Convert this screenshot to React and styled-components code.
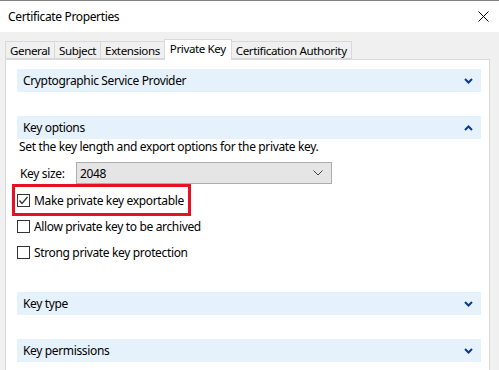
import styled, { createGlobalStyle } from 'styled-components';

const Global = createGlobalStyle`
  html, body {
    margin: 0;
    padding: 0;
    background: #f0f0f0;
    overflow: hidden;
  }
  body {
    font-family: "Noto Sans", "Segoe UI", sans-serif;
    font-size: 12px;
    letter-spacing: -0.35px;
    color: #000;
  }
`;

const Window = styled.div`
  width: 499px;
  height: 370px;
  border-top: 1px solid #808080;
  box-sizing: border-box;
  display: flex;
  flex-direction: column;
  overflow: hidden;
`;

const TitleBar = styled.div`
  height: 31px;
  background: #fff;
  display: flex;
  align-items: center;
  justify-content: space-between;
  padding: 0 10px 0 8px;
  flex-shrink: 0;
`;

const Title = styled.span`
  font-size: 12px;
`;

const Body = styled.div`
  flex: 1;
  padding: 7px 9px 0 5px;
  display: flex;
  flex-direction: column;
`;

const Tabs = styled.div`
  display: flex;
  align-items: flex-end;
  height: 20px;
  padding-left: 1px;
  position: relative;
  z-index: 1;
`;

const Tab = styled.div`
  height: ${p => (p.$active ? '21px' : '18px')};
  margin-bottom: ${p => (p.$active ? '-1px' : '0')};
  padding: 0 ${p => (p.$active ? '5px' : '4px')};
  font-size: 11.6px;
  letter-spacing: -0.4px;
  background: ${p => (p.$active ? '#fff' : '#f0f0f0')};
  border: 1px solid #d9d9d9;
  border-bottom: ${p => (p.$active ? 'none' : '1px solid #d9d9d9')};
  margin-left: -1px;
  box-sizing: border-box;
  display: flex;
  align-items: ${p => (p.$active ? 'flex-start' : 'center')};
  padding-top: ${p => (p.$active ? '1px' : '0')};
  white-space: nowrap;
`;

const Panel = styled.div`
  flex: 1;
  background: #fff;
  border: 1px solid #d9d9d9;
  border-bottom: none;
  padding: 9px 8px 0 11px;
  display: flex;
  flex-direction: column;
`;

const SectionHeader = styled.div`
  height: 23px;
  background: #e5f1fb;
  display: flex;
  align-items: center;
  justify-content: space-between;
  padding: 0 8px 0 6px;
  margin-top: ${p => p.$gap || 0}px;
  flex-shrink: 0;
`;

const Description = styled.div`
  margin: 0 0 0 2px;
  line-height: 16px;
`;

const SizeRow = styled.div`
  display: flex;
  align-items: center;
  margin-top: 7px;
  height: 22px;
`;

const SizeLabel = styled.span`
  width: 56px;
  padding-left: 3px;
`;

const Select = styled.div`
  width: 256px;
  height: 22px;
  box-sizing: border-box;
  background: #e5e5e5;
  border: 1px solid #adadad;
  display: flex;
  align-items: center;
  justify-content: space-between;
  padding: 0 8px 0 3px;
`;

const Options = styled.div`
  display: flex;
  flex-direction: column;
  align-items: flex-start;
  position: relative;
  left: -5px;
`;

const Highlight = styled.div`
  border: 3px solid #e81123;
  padding: 0 4px 0 2px;
  display: flex;
  margin-bottom: -3px;
`;

const OptionRow = styled.label`
  display: flex;
  align-items: center;
  gap: 4px;
  height: 26px;
  padding-left: ${p => (p.$plain ? '5px' : '0')};
`;

const Box = styled.span`
  width: 13px;
  height: 13px;
  box-sizing: border-box;
  border: 1px solid #333;
  background: #fff;
  display: flex;
  align-items: center;
  justify-content: center;
`;

const Chevron = ({ up }) => (
  <svg width="9" height="6" viewBox="0 0 9 6">
    <path
      d={up ? 'M1 5 L4.5 1.5 L8 5' : 'M1 1 L4.5 4.5 L8 1'}
      fill="none"
      stroke="#0b3a93"
      strokeWidth="2"
    />
  </svg>
);

const Check = () => (
  <svg width="11" height="11" viewBox="0 0 11 11">
    <path d="M1.5 5.5 L4 8.5 L9.5 2" fill="none" stroke="#333" strokeWidth="1.3" />
  </svg>
);

const Checkbox = ({ checked, children, plain }) => (
  <OptionRow $plain={plain}>
    <Box>{checked && <Check />}</Box>
    <span>{children}</span>
  </OptionRow>
);

const App = () => {
  return (
    <>
      <Global />
      <Window>
        <TitleBar>
          <Title>Certificate Properties</Title>
          <svg width="11" height="11" viewBox="0 0 11 11">
            <path d="M0.5 0.5 L10.5 10.5 M10.5 0.5 L0.5 10.5" stroke="#000" strokeWidth="1" />
          </svg>
        </TitleBar>
        <Body>
          <Tabs>
            <Tab>General</Tab>
            <Tab>Subject</Tab>
            <Tab>Extensions</Tab>
            <Tab $active>Private Key</Tab>
            <Tab>Certification Authority</Tab>
          </Tabs>
          <Panel>
            <SectionHeader>
              <span>Cryptographic Service Provider</span>
              <Chevron />
            </SectionHeader>
            <SectionHeader $gap={24}>
              <span>Key options</span>
              <Chevron up />
            </SectionHeader>
            <Description>Set the key length and export options for the private key.</Description>
            <SizeRow>
              <SizeLabel>Key size:</SizeLabel>
              <Select>
                <span>2048</span>
                <svg width="10" height="6" viewBox="0 0 10 6">
                  <path d="M0.5 0.5 L5 5 L9.5 0.5" fill="none" stroke="#444" strokeWidth="1" />
                </svg>
              </Select>
            </SizeRow>
            <Options>
              <Highlight>
                <Checkbox checked>Make private key exportable</Checkbox>
              </Highlight>
              <Checkbox plain>Allow private key to be archived</Checkbox>
              <Checkbox plain>Strong private key protection</Checkbox>
            </Options>
            <SectionHeader $gap={27}>
              <span>Key type</span>
              <Chevron />
            </SectionHeader>
            <SectionHeader $gap={24}>
              <span>Key permissions</span>
              <Chevron />
            </SectionHeader>
          </Panel>
        </Body>
      </Window>
    </>
  );
};

export default App;
